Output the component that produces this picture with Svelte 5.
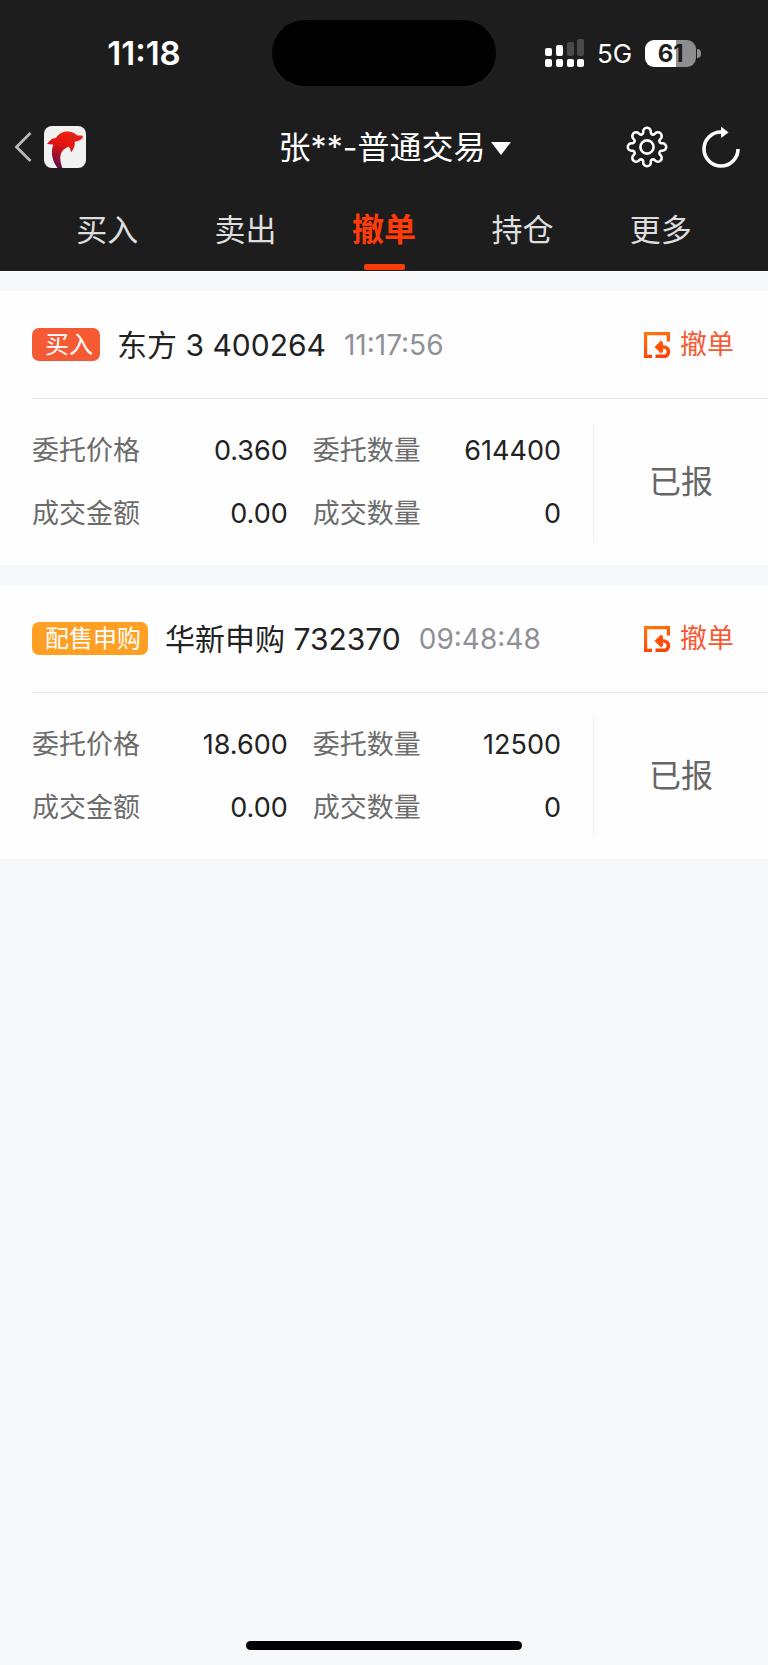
<script>
	const tabs = ['买入', '卖出', '撤单', '持仓', '更多'];
	let active = $state('撤单');

	const orders = [
		{
			type: '买入',
			kind: 'buy',
			name: '东方 3 400264',
			time: '11:17:56',
			fields: [
				['委托价格', '0.360'],
				['委托数量', '614400'],
				['成交金额', '0.00'],
				['成交数量', '0']
			],
			status: '已报'
		},
		{
			type: '配售申购',
			kind: 'placing',
			name: '华新申购 732370',
			time: '09:48:48',
			fields: [
				['委托价格', '18.600'],
				['委托数量', '12500'],
				['成交金额', '0.00'],
				['成交数量', '0']
			],
			status: '已报'
		}
	];

	// eight round teeth joined by small hollows
	function gearPath() {
		const point = (x, y, a) =>
			(x * Math.cos(a) - y * Math.sin(a)).toFixed(2) + ' ' + (x * Math.sin(a) + y * Math.cos(a)).toFixed(2);
		let d = '';
		for (let i = 0; i < 8; i++) {
			const a = (i * Math.PI) / 4;
			d += (i ? 'A2.3 2.3 0 0 0 ' : 'M') + point(14.2, -3.8, a);
			d += 'L' + point(15.4, -3.8, a) + 'A3.8 3.8 0 0 1 ' + point(15.4, 3.8, a) + 'L' + point(14.2, 3.8, a);
		}
		return d + 'A2.3 2.3 0 0 0 ' + point(14.2, -3.8, 0) + 'Z';
	}
</script>

<div class="page">
	<header>
		<div class="statusbar">
			<div class="clock">11:18</div>
			<div class="island"></div>
			<div class="signals">
				<svg width="40" height="28" viewBox="0 0 40 28" aria-hidden="true">
					<g fill="#fff">
						<rect x="0" y="9" width="7" height="8" rx="2" />
						<rect x="11" y="6" width="7" height="11" rx="2" />
						<rect x="0" y="20" width="7" height="8" rx="2" />
						<rect x="11" y="20" width="7" height="8" rx="2" />
						<rect x="22" y="20" width="7" height="8" rx="2" />
						<rect x="32" y="20" width="7" height="8" rx="2" />
					</g>
					<g fill="#4a4a4a">
						<rect x="22" y="3" width="7" height="14" rx="2" />
						<rect x="32" y="0" width="7" height="17" rx="2" />
					</g>
				</svg>
				<span class="network">5G</span>
				<span class="battery">61</span>
				<span class="nub"></span>
			</div>
		</div>

		<div class="navbar">
			<div class="side">
				<button aria-label="返回">
					<svg width="18" height="32" viewBox="0 0 18 32">
						<path d="M16.500 2L2.500 16L16.500 30" fill="none" stroke="#b9b9b9" stroke-width="2.8" />
					</svg>
				</button>
				<svg class="logo" width="42" height="42" viewBox="0 0 42 42" aria-hidden="true">
					<defs>
						<linearGradient id="skin" x1="0.7" y1="0" x2="0.3" y2="1">
							<stop offset="0" stop-color="#f5200f" />
							<stop offset="0.45" stop-color="#dd1414" />
							<stop offset="1" stop-color="#5c0a4c" />
						</linearGradient>
					</defs>
					<rect width="42" height="42" rx="8" fill="#f1f1f2" />
					<path
						d="M3 17.500C6 15.500 6.500 12 12 12C15 7 20 5.300 24.500 5.500C28.500 5.700 31 7.500 33 9.300C35 9.700 37 9.300 38.500 9.800Q39.500 11.500 38 12.800C36 14.500 33.500 15.300 30.700 15.800C31.300 20 29.500 23.500 27 26.500C26.500 24.500 26.500 22.500 25 20.700C19 22 16 27 16.300 33C16.500 36.500 17.500 39.500 18.500 42H13.500C9 36 6 27 9.300 18.500C7.500 18.800 5 18.300 3 17.500Z"
						fill="url(#skin)"
					/>
					<circle cx="28.500" cy="10.300" r="1.300" fill="#5b5560" />
				</svg>
			</div>
			<button class="account">张**-普通交易<span class="caret"></span></button>
			<div class="side tools">
				<button aria-label="设置">
					<svg width="42" height="42" viewBox="-21 -21 42 42">
						<path d={gearPath()} fill="none" stroke="#fff" stroke-width="2.6" />
						<circle r="6.600" fill="none" stroke="#fff" stroke-width="2.6" />
					</svg>
				</button>
				<button aria-label="刷新">
					<svg width="38" height="42" viewBox="-19 -23 38 42">
						<path d="M17 0A17 17 0 1 1 0 -17" fill="none" stroke="#fff" stroke-width="3.6" />
						<path d="M0 -22.500L7.500 -16.500L0 -11Z" fill="#fff" />
					</svg>
				</button>
			</div>
		</div>

		<nav>
			{#each tabs as tab}
				<button class:active={tab === active} onclick={() => (active = tab)}>{tab}</button>
			{/each}
		</nav>
	</header>

	<main>
		{#each orders as order}
			<article>
				<div class="top">
					<span class="tag {order.kind}">{order.type}</span>
					<h2>{order.name}</h2>
					<time>{order.time}</time>
					<button class="cancel">
						<svg width="26" height="26" viewBox="0 0 26 26" aria-hidden="true">
							<defs>
								<linearGradient id="flame-{order.kind}" gradientUnits="userSpaceOnUse" x1="0" y1="0" x2="8" y2="26">
									<stop offset="0" stop-color="#ff7a0a" />
									<stop offset="1" stop-color="#ff4208" />
								</linearGradient>
							</defs>
							<g fill="none" stroke="url(#flame-{order.kind})" stroke-width="3.2">
								<path d="M8 24.400H1.600V1.600H24.400V9.500" />
								<path d="M15 15H19.500C26 15 26 24.400 19.500 24.400H11.500" stroke-width="3.600" />
							</g>
							<path d="M10.500 15L17 8.500L19 10.500V19.500L17 21.500Z" fill="#ff5208" />
						</svg>
						撤单
					</button>
				</div>
				<div class="detail">
					<dl>
						{#each order.fields as [label, value]}
							<div class="field">
								<dt>{label}</dt>
								<dd>{value}</dd>
							</div>
						{/each}
					</dl>
					<div class="status">{order.status}</div>
				</div>
			</article>
		{/each}
	</main>

	<div class="home"></div>
</div>

<style>
	:global(body) {
		margin: 0;
		background: #f7f8fa;
	}

	.page {
		display: flex;
		flex-direction: column;
		min-height: 100vh;
		font-family: Inter, 'Noto Sans CJK SC', sans-serif;
		color: #222;
	}

	button {
		display: flex;
		align-items: center;
		margin: 0;
		padding: 0;
		border: 0;
		background: none;
		color: inherit;
		font: inherit;
		cursor: pointer;
	}

	svg {
		display: block;
		flex: none;
	}

	header {
		background: #1d1d1d;
		color: #fff;
		border-bottom: 1px solid #fff;
	}

	.statusbar {
		display: grid;
		grid-template-columns: 1fr 224px 1fr;
		height: 66px;
		padding-top: 20px;
	}

	.clock {
		padding-left: 16px;
		text-align: center;
		font-size: 33px;
		font-weight: 600;
		line-height: 66px;
	}

	.island {
		border-radius: 33px;
		background: #000;
	}

	.signals {
		display: flex;
		align-items: center;
		padding-left: 49px;
	}

	.network {
		margin-left: 12px;
		font-size: 26px;
	}

	.battery {
		width: 51px;
		height: 27px;
		margin-left: 13px;
		border-radius: 9px;
		background: linear-gradient(90deg, #fff 61%, #8e8e8e 61%);
		color: #1d1d1d;
		font-size: 24px;
		font-weight: 700;
		line-height: 27px;
		text-align: center;
	}

	.nub {
		width: 4px;
		height: 9px;
		margin-left: 1px;
		border-radius: 0 4px 4px 0;
		background: #8e8e8e;
	}

	.navbar {
		display: flex;
		align-items: center;
		height: 86px;
		padding: 18px 14px 0;
	}

	.side {
		display: flex;
		flex: 1;
		align-items: center;
		gap: 12px;
	}

	.tools {
		justify-content: flex-end;
		gap: 34px;
		padding-right: 14px;
	}

	.account {
		padding: 2px 0 0 36px;
		font-size: 32px;
		line-height: 48px;
	}

	.caret {
		margin-left: 6px;
		border: 10px solid transparent;
		border-top: 13px solid #fff;
		border-bottom: 0;
	}

	nav {
		display: flex;
		height: 81px;
		padding: 0 38px;
	}

	nav button {
		flex: 1;
		flex-direction: column;
		padding-top: 16px;
		color: #dedede;
		font-size: 31px;
		line-height: 48px;
	}

	nav .active {
		color: #ff3c08;
		font-size: 32px;
		font-weight: 700;
	}

	nav .active::after {
		content: '';
		width: 41px;
		height: 6px;
		margin-top: 10px;
		border-radius: 2px;
		background: #ff3c08;
	}

	main {
		display: flex;
		flex-direction: column;
		gap: 20px;
		padding-top: 19px;
	}

	article {
		padding-left: 32px;
		background: #fefefe;
	}

	.top {
		display: flex;
		align-items: center;
		height: 107px;
		padding-right: 34px;
		border-bottom: 1px solid #e6e6e8;
		line-height: 40px;
	}

	.tag {
		padding: 0 7px 0 13px;
		border-radius: 7px;
		color: #fff;
		font-size: 24px;
		line-height: 33px;
	}

	.buy {
		background: #f65a34;
	}

	.placing {
		background: #ffa024;
	}

	h2 {
		margin: 0 0 0 17px;
		font-size: 30px;
		font-weight: 400;
	}

	time {
		margin-left: 18px;
		color: #909096;
		font-size: 28px;
	}

	.cancel {
		gap: 10px;
		margin-left: auto;
		color: #f65a34;
		font-size: 27px;
	}

	.detail {
		display: flex;
		padding: 24px 0;
	}

	dl {
		display: grid;
		flex: 1;
		grid-template-columns: 34fr 33fr;
		gap: 15px 25px;
		margin: 0;
		padding: 4px 32px 3px 0;
		font-size: 27px;
		line-height: 48px;
	}

	.field {
		display: flex;
		justify-content: space-between;
	}

	dt {
		color: #6c6c6c;
	}

	dd {
		margin: 0;
	}

	.status {
		display: flex;
		flex: 0 0 174px;
		align-items: center;
		justify-content: center;
		border-left: 1px solid #ededef;
		color: #666;
		font-size: 32px;
		line-height: 48px;
	}

	.home {
		width: 36%;
		height: 9px;
		margin: auto auto 15px;
		border-radius: 5px;
		background: #000;
	}
</style>
